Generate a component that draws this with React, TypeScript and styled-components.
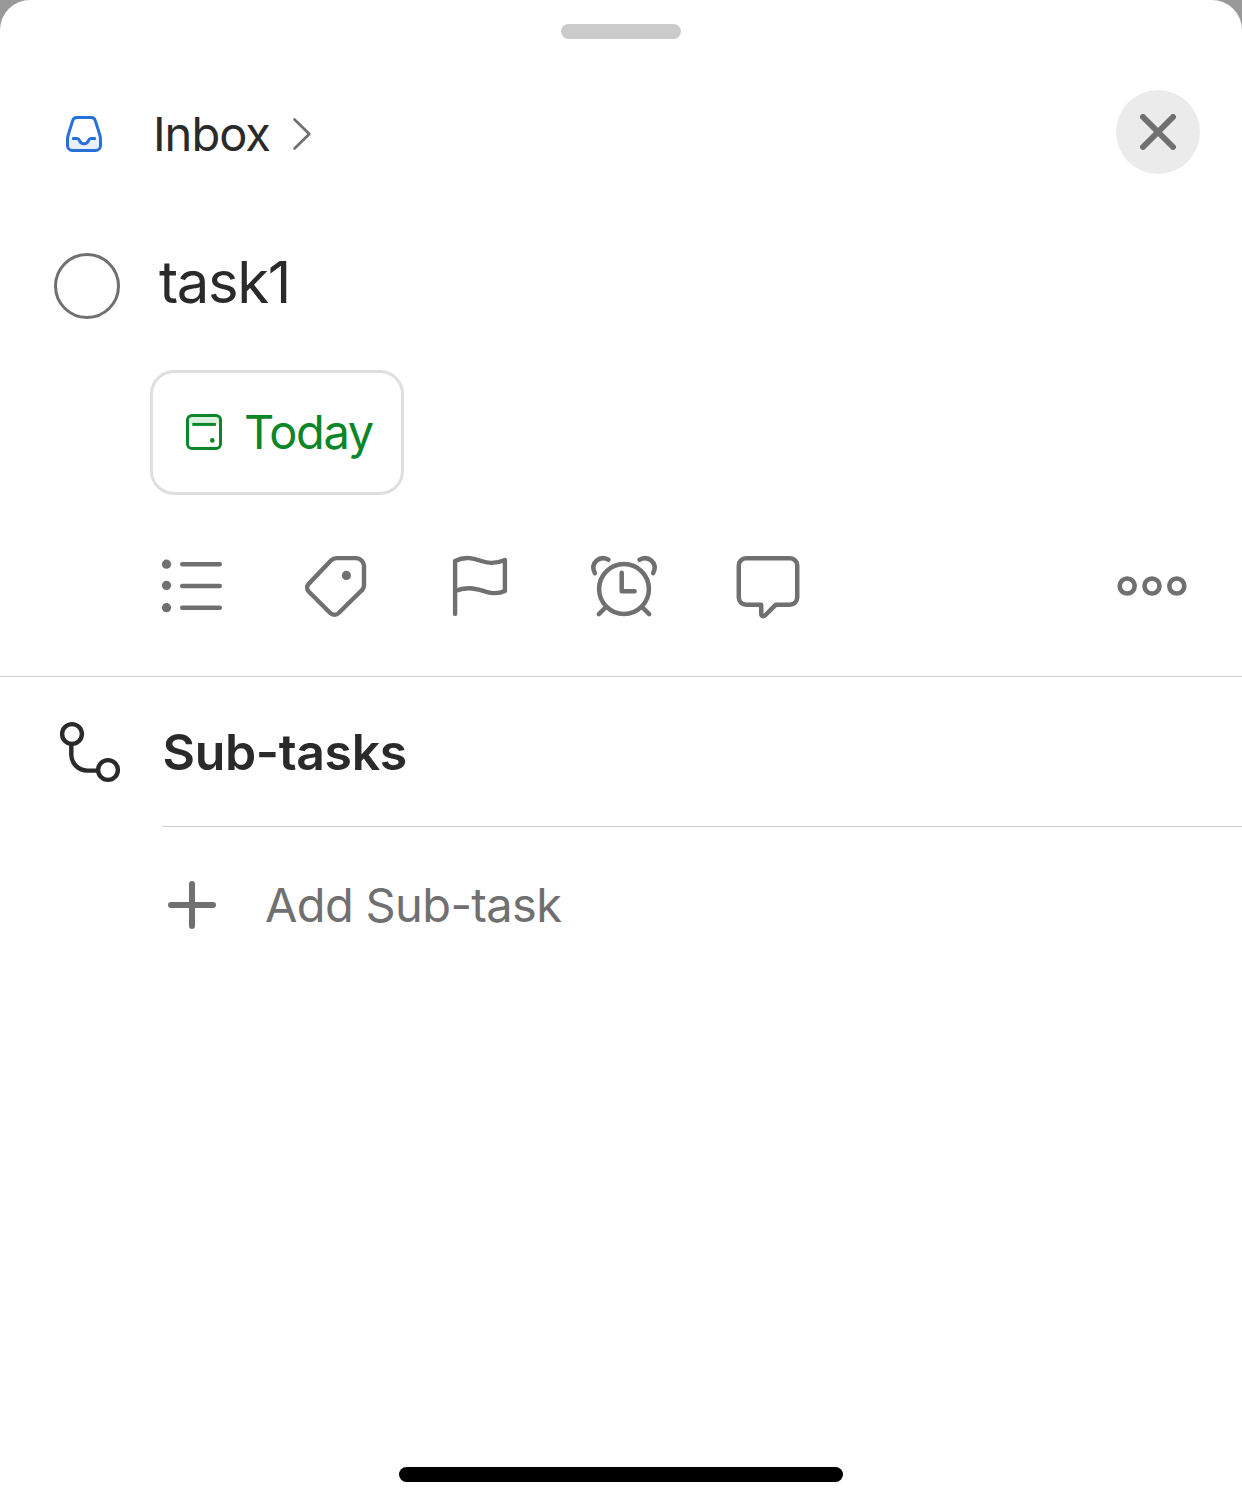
import React from "react";
import styled, { createGlobalStyle } from "styled-components";

const color = {
  ink: "#2a2a2a",
  muted: "#707070",
  blue: "#276fd9",
  green: "#0b8628",
  line: "#cfcfcf",
};

const GlobalStyle = createGlobalStyle`
  *, *::before, *::after { box-sizing: border-box; }
  body { margin: 0; background: #999999; }
  button { margin: 0; padding: 0; border: 0; background: none; color: inherit; font: inherit; }
  svg { display: block; flex: none; }
`;

const Sheet = styled.main`
  display: flex;
  flex-direction: column;
  width: 1242px;
  height: 1506px;
  padding-top: 24px;
  overflow: hidden;
  border-radius: 30px 30px 0 0;
  background: #fff;
  color: ${color.ink};
  font-family: Inter, "Liberation Sans", sans-serif;
`;

const Grabber = styled.div`
  flex: none;
  align-self: center;
  width: 120px;
  height: 15px;
  border-radius: 8px;
  background: #cbcbcb;
`;

const Header = styled.header`
  display: flex;
  align-items: center;
  justify-content: space-between;
  height: 84px;
  margin-top: 51px;
  padding: 0 42px 0 66px;
`;

const Label = styled.span<{ $size: number; $track?: number; $weight?: number }>`
  font-size: ${(p) => p.$size}px;
  font-weight: ${(p) => p.$weight ?? 400};
  letter-spacing: ${(p) => p.$track ?? 0}px;
  line-height: 66px;
  white-space: nowrap;
`;

const ProjectLink = styled.button`
  display: flex;
  align-items: center;
  height: 36px;
  padding-top: 4px;
  color: ${color.muted};
`;

const ProjectName = styled(Label)`
  margin: 0 22px 0 51px;
  color: ${color.ink};
`;

const CloseButton = styled.button`
  display: grid;
  place-items: center;
  width: 84px;
  height: 84px;
  border-radius: 50%;
  background: #ebebeb;
  color: ${color.muted};
`;

const TaskRow = styled.section`
  display: flex;
  align-items: center;
  gap: 39px;
  height: 66px;
  margin-top: 79px;
  padding-left: 54px;
`;

const Checkbox = styled.button`
  width: 66px;
  height: 66px;
  border: 3px solid ${color.muted};
  border-radius: 50%;
`;

const TaskTitle = styled(Label)`
  margin-top: -8px;
`;

const DateChip = styled.button`
  display: flex;
  flex: none;
  align-items: center;
  gap: 22px;
  width: 254px;
  height: 125px;
  margin: 51px 0 0 150px;
  padding: 0 0 1px 33px;
  border: 3px solid #dfdfdf;
  border-radius: 24px;
  color: ${color.green};
`;

const Toolbar = styled.nav`
  display: flex;
  align-items: center;
  justify-content: space-between;
  height: 182px;
  padding: 0 54px 0 156px;
  border-bottom: 1px solid ${color.line};
  color: ${color.muted};
`;

const ToolGroup = styled.div`
  display: flex;
  gap: 72px;
`;

const SectionHeader = styled.div`
  display: flex;
  align-items: stretch;
  height: 150px;
  padding-left: 54px;
`;

const SectionIcon = styled.div`
  display: flex;
  align-items: center;
  width: 108px;
`;

const SectionTitle = styled.div`
  display: flex;
  flex: 1;
  align-items: center;
  padding-left: 0.5px;
  border-bottom: 1px solid ${color.line};
`;

const AddRow = styled.button`
  display: flex;
  align-items: center;
  gap: 49px;
  height: 156px;
  padding-left: 168px;
  color: ${color.muted};
`;

const HomeIndicator = styled.div`
  align-self: center;
  width: 444px;
  height: 15px;
  margin: auto 0 24px;
  border-radius: 8px;
  background: #000;
`;

type GlyphProps = { size?: number; width?: number; stroke?: number; children: React.ReactNode };

const Glyph = ({ size = 72, width = size, stroke = 4.4, children }: GlyphProps) => (
  <svg
    width={width}
    height={size}
    viewBox={`0 0 ${width} ${size}`}
    fill="none"
    stroke="currentColor"
    strokeWidth={stroke}
    strokeLinecap="round"
    strokeLinejoin="round"
    aria-hidden="true"
  >
    {children}
  </svg>
);

const InboxIcon = () => (
  <svg width="36" height="36" viewBox="0 0 36 36" fill="none" stroke={color.blue} strokeWidth="3" strokeLinecap="round" strokeLinejoin="round">
    <path d="M2 22.4h9.5c1 4 3.4 5.6 6.5 5.6s5.5-1.6 6.500-5.600H34V31a3.500 3.500 0 0 1-3.500 3.500h-25A3.500 3.500 0 0 1 2 31z" fill="#e8f0fb" stroke="none" />
    <path d="M11 1.500h14a4.500 4.500 0 0 1 4.300 3.100l4.300 13.600c.7 2.100.9 3.800.9 5.800v5.500a5 5 0 0 1-5 5h-23a5 5 0 0 1-5-5V24c0-2 .2-3.700.9-5.800L6.700 4.600A4.500 4.500 0 0 1 11 1.500z" />
    <path d="M7.300 22.400h3.900c1.200 0 1.600.6 2 1.700.8 2.300 2.300 3.700 4.800 3.700s4-1.400 4.800-3.700c.4-1.100.8-1.700 2-1.700h3.900" />
  </svg>
);

const CalendarIcon = () => (
  <Glyph size={36} stroke={3}>
    <path d="M2 10V6a4 4 0 0 1 4-4h24a4 4 0 0 1 4 4v4z" fill="#dcf2e1" stroke="none" />
    <rect x="1.500" y="1.500" width="33" height="33" rx="4.500" />
    <path d="M6.300 10.400h23.600" strokeLinecap="butt" />
    <circle cx="26.300" cy="26.400" r="2.300" fill="currentColor" stroke="none" />
  </Glyph>
);

const ListIcon = () => (
  <Glyph>
    <g fill="currentColor" stroke="none">
      <circle cx="10.500" cy="14.200" r="4.600" />
      <circle cx="10.500" cy="35.400" r="4.600" />
      <circle cx="10.500" cy="57.700" r="4.600" />
    </g>
    <path d="M26.200 14.200h37.600M26.200 36h37.600M26.200 57.700h37.600" />
  </Glyph>
);

const TagIcon = () => (
  <Glyph>
    <path d="M36.500 8.100H56a8 8 0 0 1 8 8V35c0 2-.7 3.900-2.200 5.300L38.700 63c-2.400 2.400-6.100 2.400-8.500 0L8.900 41.800c-2.300-2.400-2.300-5.900 0-8.200L31.200 10.300c1.500-1.500 3.200-2.200 5.300-2.200z" />
    <circle cx="46.400" cy="25.400" r="4.600" fill="currentColor" stroke="none" />
  </Glyph>
);

const FlagIcon = () => (
  <Glyph>
    <path d="M11.100 63.900V11C15.500 8.700 20.500 7.700 25.500 8.100 34 8.800 38.500 12.700 47 12.900 52 13 56.500 11.900 60.900 10V40.900C56 43.300 50.500 43.600 45.500 42.600 38.500 41.200 33.500 38.300 25.500 38.200 20.500 38.100 15.500 39 11.100 40.900" />
  </Glyph>
);

const AlarmIcon = () => (
  <Glyph stroke={4.5}>
    <circle cx="36" cy="39" r="24.900" />
    <path d="M33.700 22.700v18.500h12.900M18 57l-7.200 7.100M54 57l7.200 7.100" />
    <path d="M20.500 9.700C12 5.200 1.500 12.500 6.900 23.200M51.500 9.700C60 5.200 70.500 12.500 65.100 23.200" />
  </Glyph>
);

const CommentIcon = () => (
  <Glyph stroke={4.5}>
    <path d="M14 8.200h44a7.200 7.200 0 0 1 7.200 7.200v32.200a7.200 7.200 0 0 1-7.200 7.200H43.600L33 65.500c-1.400 1.400-3.800.6-3.800-1.700v-9H14a7.200 7.200 0 0 1-7.200-7.200V15.400A7.200 7.200 0 0 1 14 8.200z" />
  </Glyph>
);

const MoreIcon = () => (
  <Glyph stroke={4.6}>
    <circle cx="11.200" cy="36" r="7.500" />
    <circle cx="36" cy="36" r="7.500" />
    <circle cx="60.800" cy="36" r="7.500" />
  </Glyph>
);

const BranchIcon = () => (
  <Glyph>
    <circle cx="18" cy="18" r="9.900" />
    <circle cx="54" cy="54" r="9.900" />
    <path d="M17.300 28v10.600a16 16 0 0 0 16 16H44" strokeLinecap="butt" />
  </Glyph>
);

export default function App() {
  return (
    <>
      <GlobalStyle />
      <Sheet>
        <Grabber />
        <Header>
          <ProjectLink>
            <InboxIcon />
            <ProjectName $size={47} $track={-1}>Inbox</ProjectName>
            <Glyph size={36} width={20} stroke={2.7}>
              <path d="M2.500 3.500 17.300 18 2.500 32.500" />
            </Glyph>
          </ProjectLink>
          <CloseButton aria-label="Close">
            <Glyph size={36} stroke={6}>
              <path d="M3 3l30 30M33 3 3 33" />
            </Glyph>
          </CloseButton>
        </Header>
        <TaskRow>
          <Checkbox aria-label="Complete task" />
          <TaskTitle $size={58} $track={-1.4}>task1</TaskTitle>
        </TaskRow>
        <DateChip>
          <CalendarIcon />
          <Label $size={47} $track={-1.4}>Today</Label>
        </DateChip>
        <Toolbar>
          <ToolGroup>
            <ListIcon />
            <TagIcon />
            <FlagIcon />
            <AlarmIcon />
            <CommentIcon />
          </ToolGroup>
          <MoreIcon />
        </Toolbar>
        <SectionHeader>
          <SectionIcon>
            <BranchIcon />
          </SectionIcon>
          <SectionTitle>
            <Label $size={50} $weight={600} $track={-0.35}>Sub-tasks</Label>
          </SectionTitle>
        </SectionHeader>
        <AddRow>
          <Glyph size={48} stroke={6}>
            <path d="M24 3v42M3 24h42" />
          </Glyph>
          <Label $size={47} $track={-0.65}>Add Sub-task</Label>
        </AddRow>
        <HomeIndicator />
      </Sheet>
    </>
  );
}
